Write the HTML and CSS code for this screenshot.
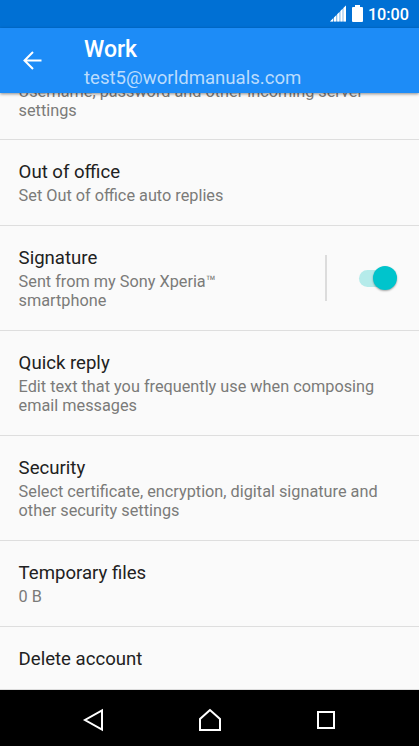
FILE: index.html
```html
<!DOCTYPE html>
<html lang="en">
<head>
<meta charset="utf-8">
<title>Work</title>
<link rel="stylesheet" href="styles.css">
</head>
<body>
<div class="screen">
  <div class="status">
    <svg class="signal" width="17" height="17" viewBox="0 0 17 17" fill="#fff"><path d="M0 16.500L3 13.500v3zM4 12.500l2.300-2.300v6.300H4zM7.200 9.300l2.300-2.300v9.500H7.200zM10.400 6l2.200-2.200v12.700h-2.200zM13.400 3L16 .5v16h-2.600z"/><path opacity=".4" d="M0 16.500L16 .5v16z"/></svg>
    <svg class="battery" width="11" height="17" viewBox="0 0 11 17"><path d="M1 2h2V0h5v2h2q1 0 1 1v13q0 1-1 1H1q-1 0-1-1V3q0-1 1-1z" fill="#fff"/></svg>
    <span class="clock">10:00</span>
  </div>
  <header class="appbar">
    <svg class="back" width="20" height="20" viewBox="0 0 20 20" fill="none" stroke="#fff" stroke-width="2"><path d="M19.500 9.500h-17M11 1L2.500 9.500 11 18"/></svg>
    <div class="heading"><h1>Work</h1><p>test5@worldmanuals.com</p></div>
  </header>
  <main class="list">
    <section class="row incoming"><p>Username, password and other incoming server<br>settings</p></section>
    <section class="row"><h2>Out of office</h2><p>Set Out of office auto replies</p></section>
    <section class="row split"><div class="label"><h2>Signature</h2><p>Sent from my Sony Xperia™<br>smartphone</p></div><div class="rule"></div><div class="switch"><div class="thumb"></div></div></section>
    <section class="row"><h2>Quick reply</h2><p>Edit text that you frequently use when composing<br>email messages</p></section>
    <section class="row"><h2>Security</h2><p>Select certificate, encryption, digital signature and<br>other security settings</p></section>
    <section class="row"><h2>Temporary files</h2><p>0 B</p></section>
    <section class="row last"><h2>Delete account</h2></section>
  </main>
  <nav class="nav">
    <svg width="22" height="24" viewBox="0 0 22 24" fill="none" stroke="#fff" stroke-width="2"><path d="M20 2.500v19L3 12z"/></svg>
    <svg width="24" height="24" viewBox="0 0 24 24" fill="none" stroke="#fff" stroke-width="2"><path d="M12 2L2 11v11h20V11z"/></svg>
    <svg width="20" height="20" viewBox="0 0 20 20" fill="none" stroke="#fff" stroke-width="2"><path d="M2 2h16v16H2z"/></svg>
  </nav>
</div>
</body>
</html>
```
FILE: styles.css
```css
* { box-sizing: border-box; margin: 0; padding: 0; }
body { font-family: Roboto, sans-serif; background: #fafafa; }
.screen { width: 419px; height: 746px; display: flex; flex-direction: column; overflow: hidden; }
.status { flex: none; height: 28px; background: #0070d4; color: #fff; display: flex; align-items: center; justify-content: flex-end; padding-right: 10px; }
.signal, .battery { margin-top: -1px; }
.battery { margin-left: 5px; margin-right: 5px; }
.clock { font-size: 16.200px; font-weight: 500; line-height: 20px; padding-top: 1px; }
.appbar { flex: none; height: 65px; background: #1d8cf7; color: #fff; display: flex; padding-left: 22px; box-shadow: 0 1px 3px rgba(0,0,0,.45); z-index: 1; }
.back { margin-top: 23px; }
.heading { margin-left: 42px; padding-top: 8px; }
.heading h1 { font-size: 23px; line-height: 28px; font-weight: 500; }
.heading p { font-size: 18.600px; line-height: 27px; padding-top: 1px; color: #bbdcfd; }
.list { flex: 1; min-height: 0; background: #fafafa; box-shadow: inset 0 -1px #dcdcdc; }
.row { border-bottom: 1px solid #dedede; padding: 20px 18.600px 20px; }
.row h2 { font-size: 18.600px; line-height: 24px; font-weight: 400; color: #212121; }
.row p { font-size: 16.270px; line-height: 19px; padding-top: 2px; color: #7b7b79; white-space: nowrap; }
.row.incoming { margin-top: -13px; padding-top: 0; padding-bottom: 19px; }
.split { display: flex; }
.label { width: 306.400px; }
.rule { width: 2px; height: 46px; margin-top: 9px; background: #dcdcdc; }
.switch { width: 34px; height: 17px; margin: 24px 0 0 32px; border-radius: 9px; background: #b5ebea; }
.thumb { width: 24px; height: 24px; margin: -4px 0 0 14px; border-radius: 50%; background: #00c4cc; box-shadow: 0 1px 2px rgba(0,0,0,.35); }
.row.last { border: 0; padding-bottom: 0; }
.nav { flex: none; height: 56px; background: #000; display: flex; align-items: center; justify-content: space-between; padding: 4px 83px 0 82px; }
```
